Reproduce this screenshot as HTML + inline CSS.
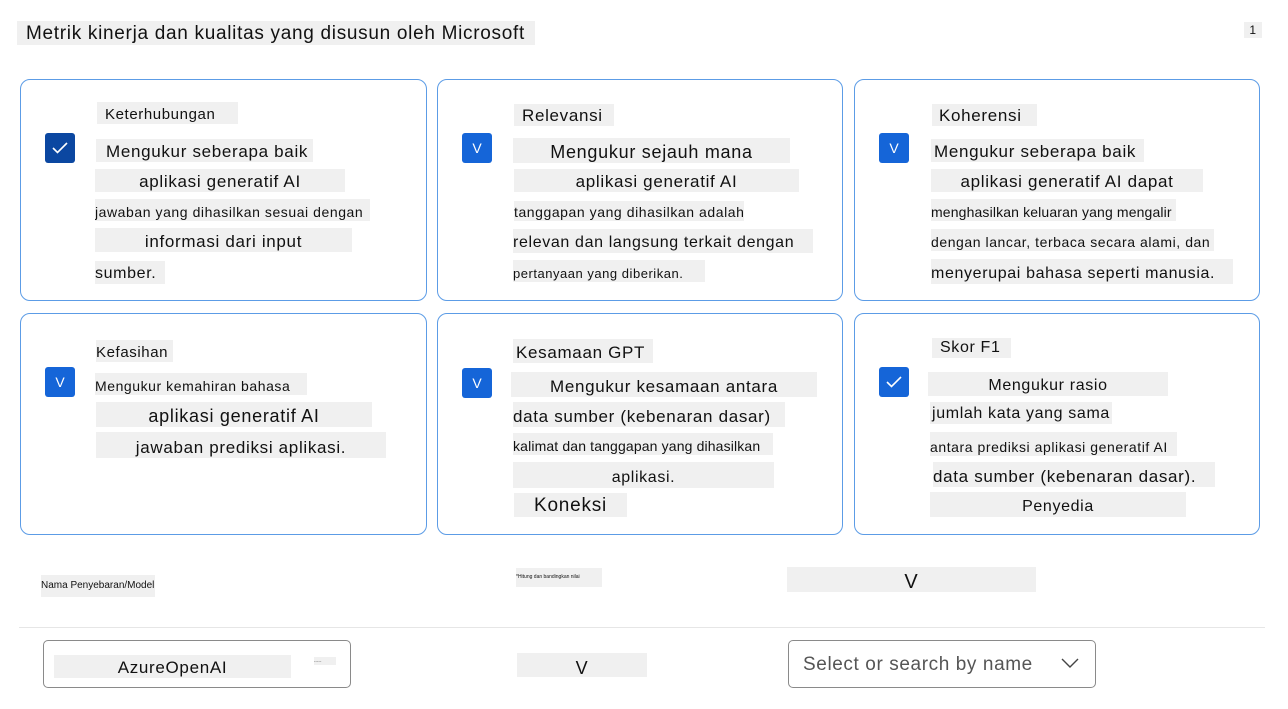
<!DOCTYPE html>
<html><head><meta charset="utf-8"><style>
body{margin:0;width:1288px;height:709px;background:#fff;position:relative;overflow:hidden;font-family:"Liberation Sans",sans-serif;color:#111}
.t{position:absolute;background:#f0f0f0;white-space:nowrap;overflow:hidden;line-height:1;display:flex;align-items:flex-end;padding-bottom:2px;box-sizing:border-box;letter-spacing:0.04em}
.c{justify-content:center}
.card{position:absolute;border:1px solid #5c9ce6;border-radius:10px;box-sizing:border-box}
.cb{position:absolute;width:30px;height:30px;border-radius:3px;background:#1565d8;color:#fff;font-size:14px;display:flex;align-items:center;justify-content:center}
.box{position:absolute;border:1px solid #8a8a8a;border-radius:5px;box-sizing:border-box}
</style></head><body>
<div class="t" style="left:17px;top:21px;width:518px;height:24px;font-size:19px;padding-left:9px;letter-spacing:0.7px">Metrik kinerja dan kualitas yang disusun oleh Microsoft</div>
<div class="t c" style="left:1244px;top:22px;width:18px;height:16px;font-size:12px">1</div>

<div class="card" style="left:20px;top:79px;width:407px;height:222px"></div>
<div class="card" style="left:437px;top:79px;width:406px;height:222px"></div>
<div class="card" style="left:854px;top:79px;width:406px;height:222px"></div>
<div class="card" style="left:20px;top:313px;width:407px;height:222px"></div>
<div class="card" style="left:437px;top:313px;width:406px;height:222px"></div>
<div class="card" style="left:854px;top:313px;width:406px;height:222px"></div>

<div class="cb" style="left:45px;top:133px;background:#0b47a1"><svg width="16" height="12" viewBox="0 0 16 12"><path d="M1 6l4.5 4.5L15 1" stroke="#fff" stroke-width="1.6" fill="none"/></svg></div>
<div class="cb" style="left:462px;top:133px">V</div>
<div class="cb" style="left:879px;top:133px">V</div>
<div class="cb" style="left:45px;top:367px">V</div>
<div class="cb" style="left:462px;top:368px">V</div>
<div class="cb" style="left:879px;top:367px"><svg width="16" height="12" viewBox="0 0 16 12"><path d="M1 6l4.5 4.5L15 1" stroke="#fff" stroke-width="1.6" fill="none"/></svg></div>

<div class="t" style="left:97px;top:102px;width:141px;height:22px;font-size:15px;padding-left:8px">Keterhubungan</div>
<div class="t" style="left:96px;top:139px;width:217px;height:23px;font-size:17px;padding-left:10px">Mengukur seberapa baik</div>
<div class="t c" style="left:95px;top:169px;width:250px;height:23px;font-size:17px">aplikasi generatif AI</div>
<div class="t" style="left:95px;top:199px;width:275px;height:22px;font-size:14px">jawaban yang dihasilkan sesuai dengan</div>
<div class="t c" style="left:95px;top:228px;width:257px;height:24px;font-size:17px">informasi dari input</div>
<div class="t" style="left:95px;top:261px;width:70px;height:23px;font-size:16px">sumber.</div>

<div class="t" style="left:514px;top:104px;width:100px;height:22px;font-size:17px;padding-left:8px">Relevansi</div>
<div class="t c" style="left:513px;top:138px;width:277px;height:25px;font-size:18px">Mengukur sejauh mana</div>
<div class="t c" style="left:514px;top:169px;width:285px;height:23px;font-size:17px">aplikasi generatif AI</div>
<div class="t" style="left:514px;top:201px;width:230px;height:20px;font-size:14px">tanggapan yang dihasilkan adalah</div>
<div class="t" style="left:513px;top:229px;width:300px;height:24px;font-size:16px">relevan dan langsung terkait dengan</div>
<div class="t" style="left:513px;top:260px;width:192px;height:22px;font-size:13px">pertanyaan yang diberikan.</div>

<div class="t" style="left:932px;top:104px;width:105px;height:22px;font-size:17px;padding-left:7px">Koherensi</div>
<div class="t" style="left:931px;top:139px;width:213px;height:23px;font-size:17px;padding-left:3px">Mengukur seberapa baik</div>
<div class="t c" style="left:931px;top:169px;width:272px;height:23px;font-size:17px">aplikasi generatif AI dapat</div>
<div class="t" style="left:931px;top:199px;width:245px;height:22px;font-size:14px;letter-spacing:0.01em">menghasilkan keluaran yang mengalir</div>
<div class="t" style="left:931px;top:229px;width:283px;height:22px;font-size:14px">dengan lancar, terbaca secara alami, dan</div>
<div class="t" style="left:931px;top:259px;width:302px;height:25px;font-size:16px">menyerupai bahasa seperti manusia.</div>

<div class="t" style="left:96px;top:340px;width:77px;height:22px;font-size:15px">Kefasihan</div>
<div class="t" style="left:95px;top:373px;width:212px;height:22px;font-size:14px">Mengukur kemahiran bahasa</div>
<div class="t c" style="left:96px;top:402px;width:276px;height:25px;font-size:18px">aplikasi generatif AI</div>
<div class="t c" style="left:96px;top:432px;width:290px;height:26px;font-size:17px">jawaban prediksi aplikasi.</div>

<div class="t" style="left:513px;top:339px;width:140px;height:24px;font-size:17px;padding-left:3px">Kesamaan GPT</div>
<div class="t c" style="left:511px;top:372px;width:306px;height:25px;font-size:17px">Mengukur kesamaan antara</div>
<div class="t" style="left:513px;top:402px;width:272px;height:25px;font-size:17px">data sumber (kebenaran dasar)</div>
<div class="t" style="left:513px;top:433px;width:260px;height:22px;font-size:14px;letter-spacing:0.01em">kalimat dan tanggapan yang dihasilkan</div>
<div class="t c" style="left:513px;top:462px;width:261px;height:26px;font-size:16px">aplikasi.</div>
<div class="t c" style="left:514px;top:493px;width:113px;height:24px;font-size:19px">Koneksi</div>

<div class="t" style="left:932px;top:338px;width:79px;height:20px;font-size:16px;padding-left:8px">Skor F1</div>
<div class="t c" style="left:928px;top:372px;width:240px;height:24px;font-size:16px">Mengukur rasio</div>
<div class="t c" style="left:930px;top:402px;width:182px;height:22px;font-size:16px">jumlah kata yang sama</div>
<div class="t" style="left:930px;top:432px;width:247px;height:24px;font-size:14px">antara prediksi aplikasi generatif AI</div>
<div class="t" style="left:933px;top:462px;width:282px;height:25px;font-size:17px">data sumber (kebenaran dasar).</div>
<div class="t c" style="left:930px;top:492px;width:256px;height:25px;font-size:16px">Penyedia</div>

<div class="t" style="left:41px;top:575px;width:114px;height:22px;font-size:10px;padding-bottom:6px;letter-spacing:0">Nama Penyebaran/Model</div>
<div class="t" style="left:516px;top:568px;width:86px;height:19px;font-size:5px;padding-bottom:7px;letter-spacing:0">*Hitung dan bandingkan nilai</div>
<div class="t c" style="left:787px;top:567px;width:249px;height:25px;font-size:20px;padding-bottom:0">V</div>

<div style="position:absolute;left:19px;top:627px;width:1246px;height:1px;background:#e6e6e6"></div>

<div class="box" style="left:43px;top:640px;width:308px;height:48px"></div>
<div class="t c" style="left:54px;top:655px;width:237px;height:23px;font-size:17px">AzureOpenAI</div>
<div class="t" style="left:314px;top:657px;width:22px;height:8px;font-size:4px">-----</div>
<div class="t c" style="left:517px;top:653px;width:130px;height:24px;font-size:18px;padding-bottom:0">V</div>

<div class="box" style="left:788px;top:640px;width:308px;height:48px"></div>
<div style="position:absolute;left:803px;top:654px;font-size:19px;color:#555;letter-spacing:0.6px">Select or search by name</div>
<svg style="position:absolute;left:1060px;top:657px" width="20" height="12" viewBox="0 0 20 12"><path d="M2 2l8 8 8-8" stroke="#444" stroke-width="1.4" fill="none"/></svg>
</body></html>
